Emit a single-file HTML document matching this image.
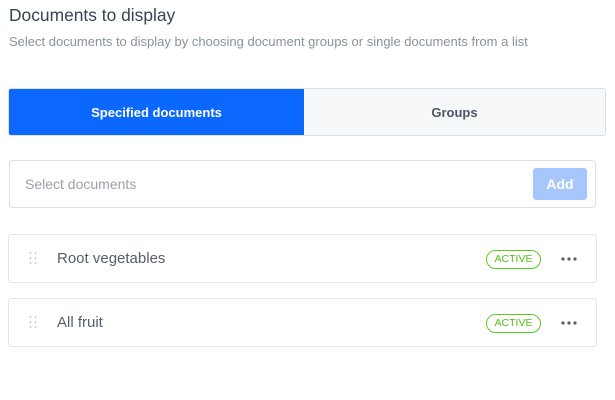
<!DOCTYPE html>
<html><head><style>
*{box-sizing:border-box;margin:0;padding:0}
body{width:615px;height:400px;background:#fff;font-family:"Liberation Sans",sans-serif;position:relative;overflow:hidden}
.a{position:absolute}
h1{position:absolute;left:9px;top:5px;font-size:17.4px;font-weight:normal;color:#384350}
.sub{left:9px;top:34px;font-size:13px;color:#8a929c}
.tabs{left:8px;top:88px;width:598px;height:48px;border:1px solid #dbdfe5;border-radius:3px;overflow:hidden;display:flex;background:#f7f8fa}
.tabs div{flex:1;display:flex;align-items:center;justify-content:center;font-size:13px;font-weight:bold}
.t1{background:#0b68ff;color:#fff;flex:0 0 295px!important}
.t2{color:#4b5563}
.inp{left:9px;top:160px;width:587px;height:48px;border:1px solid #dbdfe5;border-radius:4px}
.inp span{position:absolute;left:15px;top:15px;font-size:14px;color:#9aa1aa}
.add{position:absolute;right:8px;top:7px;width:54px;height:32px;background:#a7c6fc;border-radius:3px;color:#fff;font-weight:bold;font-size:14px;text-align:center;line-height:32px}
.row{left:8px;width:589px;height:49px;border:1px solid #e2e5e9;border-radius:3px}
.row .n{position:absolute;left:48px;top:15px;font-size:15px;color:#555e6a}
.badge{position:absolute;left:477px;top:15px;width:55px;height:19px;border:1px solid #5acb22;border-radius:10px;color:#4cbf15;font-size:10.5px;text-align:center;line-height:17px}
.dots{position:absolute;left:552px;top:22px}
.h{position:absolute;left:20px;top:16px}
</style></head><body>
<h1>Documents to display</h1>
<div class="a sub">Select documents to display by choosing document groups or single documents from a list</div>
<div class="a tabs"><div class="t1">Specified documents</div><div class="t2">Groups</div></div>
<div class="a inp"><span>Select documents</span><div class="add">Add</div></div>
<div class="a row" style="top:234px"><svg class="h" width="8" height="14"><g fill="#c4c9cf"><circle cx="1.5" cy="2" r="1"/><circle cx="6.5" cy="2" r="1"/><circle cx="1.5" cy="7" r="1"/><circle cx="6.5" cy="7" r="1"/><circle cx="1.5" cy="12" r="1"/><circle cx="6.5" cy="12" r="1"/></g></svg><span class="n">Root vegetables</span><span class="badge">ACTIVE</span><svg class="dots" width="16" height="4"><g fill="#555e6a"><circle cx="2" cy="2" r="1.6"/><circle cx="8" cy="2" r="1.6"/><circle cx="14" cy="2" r="1.6"/></g></svg></div>
<div class="a row" style="top:298px"><svg class="h" width="8" height="14"><g fill="#c4c9cf"><circle cx="1.5" cy="2" r="1"/><circle cx="6.5" cy="2" r="1"/><circle cx="1.5" cy="7" r="1"/><circle cx="6.5" cy="7" r="1"/><circle cx="1.5" cy="12" r="1"/><circle cx="6.5" cy="12" r="1"/></g></svg><span class="n">All fruit</span><span class="badge">ACTIVE</span><svg class="dots" width="16" height="4"><g fill="#555e6a"><circle cx="2" cy="2" r="1.6"/><circle cx="8" cy="2" r="1.6"/><circle cx="14" cy="2" r="1.6"/></g></svg></div>
</body></html>
